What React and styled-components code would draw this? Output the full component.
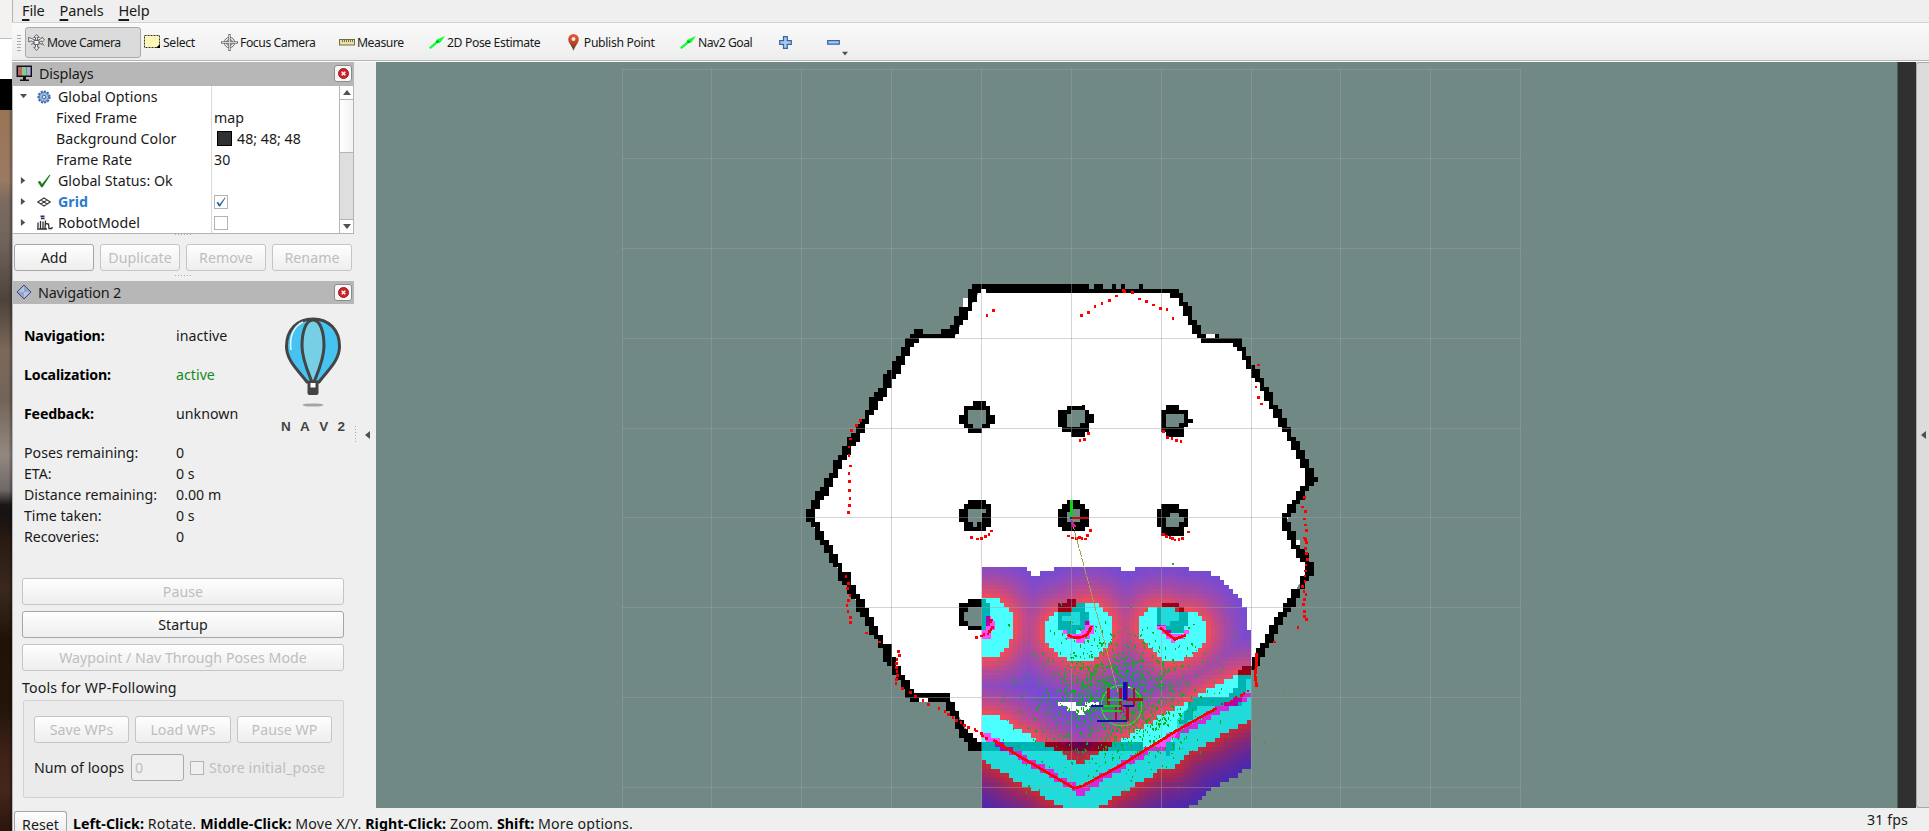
import React from "react";
import styled, { createGlobalStyle } from "styled-components";

const GlobalStyle = createGlobalStyle`
  html, body { margin: 0; padding: 0; }
  body {
    width: 1929px; height: 831px; overflow: hidden; background: #efefef; color: #1a1a1a;
    font-family: "Noto Sans", "Open Sans", sans-serif; font-size: 14.2px; letter-spacing: 0.02px;
  }
  * { box-sizing: border-box; }
  svg { display: block; flex: none; }
`;

const Screen = styled.div`display: flex; width: 1929px; height: 831px; overflow: hidden;`;
const Desktop = styled.div`
  width: 12px; flex: none;
  background:
    linear-gradient(90deg, rgba(0,0,0,0) 70%, rgba(0,0,0,.3) 100%) 0 110px no-repeat,
    linear-gradient(#f4f2f0 0 38px, #c9bdb4 38px 39px, #fff 39px 79px, #000 79px 110px,
      #987457 110px, #9b7a62 180px, #7b6b60 200px, #70645c 240px, #4e443c 300px, #5d5046 320px,
      #7b695a 350px, #736459 400px, #938880 455px, #6e6867 490px, #191615 505px, #171312 515px,
      #2a1b13 540px, #3a281e 590px, #211208 640px, #24150b 710px, #3d2117 750px, #45261c 790px, #2b150c 831px);
`;
const Window = styled.div`
  flex: 1; min-width: 0; display: flex; flex-direction: column;
  box-shadow: inset 1px 0 #b4b4b4; background: #efefef;
`;
const MenuBar = styled.div`
  height: 23px; flex: none; border-bottom: 1px solid #d2d2d2;
  display: flex; gap: 15px; padding: 0 0 0 10px; line-height: 20px;
`;
const MenuItem = styled.span`
  height: 20px; font-size: 14.5px; letter-spacing: -0.15px;
  &::first-letter { text-decoration: underline; text-decoration-thickness: 2px; text-underline-offset: 3px; }
`;
const ToolBar = styled.div`
  height: 39px; flex: none; display: flex; align-items: flex-start; padding: 4px 0 0 5px;
  background: linear-gradient(#fafafa, #ededed); border-bottom: 1px solid #fff; box-shadow: inset 0 -1px #b4b4b4;
`;
const Handle = styled.div`
  width: 4px; height: 17px; margin: 7px 4px 0 0; background: radial-gradient(circle, #aaa 0.6px, transparent 1px) 0 0 / 2px 3px;
`;
const Tool = styled.div`
  width: ${p => p.$w}px; height: 31px; flex: none; display: flex; align-items: center; gap: 2px; padding: 0 0 1px 2px;
  font-size: 12.2px; letter-spacing: ${p => p.$ls || -0.33}px; white-space: nowrap;
  border: 1px solid ${p => (p.$on ? "#a9a9a9" : "transparent")}; border-radius: 3px;
  background: ${p => (p.$on ? "#dbdbdb" : "none")};
`;
const OverflowArrow = styled(Tool)`align-items: flex-end; padding-bottom: 0;`;
const Body = styled.div`height: 746px; flex: none; display: flex;`;
const Dock = styled.div`width: 342px; display: flex; flex-direction: column;`;
const DockTitle = styled.div`
  height: ${p => p.$h}px; flex: none; display: flex; align-items: center; gap: 6px; padding: 0 2px 1px 4px;
  background: #b7b7b7; font-size: 14.4px; letter-spacing: -0.2px;
  & > span { flex: 1; }
`;
const CloseButton = styled.div`
  width: 18px; height: 17px; border: 1px solid #8c8c8c; border-radius: 3px; background: #f8f8f8;
  display: grid; place-items: center;
`;
const Tree = styled.div`
  height: 148px; flex: none; margin-left: 1px; display: flex; background: #fff; border-bottom: 1px solid #b4b4b4; border-right: 1px solid #b4b4b4;
`;
const TreeRows = styled.div`flex: 1; overflow: hidden;
  background: linear-gradient(#dadada, #dadada) 198px 0 / 1px 100% no-repeat;`;
const TreeRow = styled.div`height: 21px; display: flex; align-items: center;`;
const TreeName = styled.div`
  width: 198px; height: 21px; flex: none; display: flex; align-items: center; padding-left: ${p => (p.$child ? 43 : 7)}px;
  color: ${p => (p.$hi ? "#2a7bcc" : "#1a1a1a")}; font-weight: ${p => (p.$hi ? 700 : 400)};
`;
const Expander = styled.div`width: 17px; flex: none;`;
const IconSlot = styled.div`width: 21px; flex: none;`;
const TreeValue = styled.div`display: flex; align-items: center; gap: 5px; padding-left: 3px;`;
const Swatch = styled.i`width: 15px; height: 15px; margin-left: 3px; background: #303030; border: 1px solid #000;`;
const Check = styled.div`
  width: 14px; height: 14px; flex: none; background: ${p => (p.$off ? "#efefef" : "#fff")}; border: 1px solid #b4b4b4; display: grid; place-items: center;
`;
const Scroll = styled.div`width: 14px; flex: none; border-left: 1px solid #b4b4b4; display: flex; flex-direction: column;`;
const ScrollArrow = styled.div`height: 14px; display: grid; place-items: center; border: solid #b4b4b4; border-width: ${p => (p.$down ? "1px 0 0" : "0 0 1px")};`;
const Thumb = styled.div`height: 53px; background: linear-gradient(90deg, #fff, #f3f3f3); border-bottom: 1px solid #b4b4b4;`;
const Track = styled.div`flex: 1; background: #dedede;`;
const Grip = styled.div`
  height: ${p => p.$h}px; flex: none; display: flex; justify-content: center; align-items: ${p => p.$a || "center"};
  &::before { content: ""; width: 17px; height: 2px; background: linear-gradient(90deg, #aaa 1px, transparent 1px) 0 0 / 3px 1px repeat-x; }
`;
const ButtonRow = styled.div`display: flex; gap: 6px; padding: ${p => p.$pad || "0"};`;
const Button = styled.button`
  width: ${p => p.$w}px; height: 27px; flex: none; padding: 0 0 1px; border-radius: 3px; font: inherit; letter-spacing: 0.03px;
  border: 1px solid ${p => (p.disabled ? "#c5c5c5" : "#a6a6a6")}; background: linear-gradient(#fefefe, #eeeeee);
  color: ${p => (p.disabled ? "#bebebe" : "#1a1a1a")};
`;
const ResetButton = styled(Button)`
  height: 20px; padding: 6px 0 0; border-bottom: 0; border-radius: 3px 3px 0 0; line-height: 13px;
`;
const NavPanel = styled.div`flex: 1; display: flex; flex-direction: column; padding: 12px 10px 0 10px;`;
const Status = styled.div`display: flex; height: 262px; padding: 0 0 0 2px;`;
const StatusGrid = styled.div`
  width: 248px; flex: none; display: grid; grid-template-columns: 152px 1fr; align-content: start;
  grid-template-rows: repeat(3, 39px) 30px repeat(4, 21px); line-height: 21px;
`;
const Key = styled.span`
  align-self: ${p => (p.$b ? "center" : "end")};
  font-weight: ${p => (p.$b ? 700 : 400)}; color: ${p => (p.$b ? "#000" : "#1a1a1a")};
  letter-spacing: ${p => (p.$b ? -0.17 : -0.02)}px; white-space: nowrap;
`;
const Val = styled.span`align-self: ${p => (p.$b ? "center" : "end")}; color: ${p => p.$c || "#1a1a1a"};`;
const Logo = styled.div`
  width: 78px; flex: none; display: flex; flex-direction: column; align-items: center; color: #444; padding: 1px 0 0 4px;
  font: 700 13.5px/14px "Liberation Sans", Arial, sans-serif; letter-spacing: 0;
`;
const LogoText = styled.div`width: 64px; margin: 13px 0 0; display: flex; justify-content: space-between;`;
const Stack = styled.div`display: flex; flex-direction: column; gap: 6px;`;
const GroupLabel = styled.div`height: 29px; line-height: 33px; letter-spacing: 0.15px;`;
const Group = styled.div`
  width: 321px; height: 98px; margin-left: 1px; padding: 15px 10px; border: 1px solid #d2d2d2; border-radius: 2px; background: #ebebeb;
  display: flex; flex-direction: column; gap: 11px;
`;
const Loops = styled.div`height: 27px; display: flex; align-items: center; & > span:first-child { width: 97px; letter-spacing: 0; }`;
const NumField = styled.div`width: 53px; height: 27px; margin-right: 6px; border: 1px solid #a9a9a9; border-radius: 3px; padding: 3px 3px; line-height: 20px; color: #bebebe; background: #efefef;`;
const Dim = styled.span`color: #bebebe; margin-left: 5px; white-space: nowrap; letter-spacing: 0.14px;`;
const Splitter = styled.div`
  width: ${p => p.$w}px; flex: none; display: flex; align-items: center; justify-content: flex-end;
  gap: 8px; padding-right: ${p => p.$pr}px;
  ${p => p.$bar && "background: #dcdcdc; border: 1px solid #a9a9a9; border-right: 0; border-radius: 3px 0 0 3px;"}
`;
const Dots = styled.i`width: 1px; height: 17px; background: linear-gradient(#aaa 1px, transparent 1px) 0 0 / 1px 3px; margin-top: -2px;`;
const StatusBar = styled.div`flex: 1; display: flex; align-items: flex-start; padding: 3px 0 0 2px;`;
const Hint = styled.div`
  flex: 1; padding: 5px 0 0 6px; line-height: 15px; white-space: pre; letter-spacing: 0.16px;
  b { color: #000; letter-spacing: 0.06px; }
`;
const Fps = styled.div`width: 62px; line-height: 18px; letter-spacing: 0.1px;`;

/* ---------- icons ---------- */
const Tri = ({ d = "right", s = 8 }) => {
  const p = { right: "M1 0 6 4 1 8Z", down: "M0 1H8L4 6Z", up: "M0 6H8L4 1Z", left: "M6 0 1 4 6 8Z" }[d];
  return <svg width={s} height={s} viewBox="0 0 8 8"><path d={p} fill="#505050" /></svg>;
};
const MoveIcon = ({ focus }) => (
  <svg width="17" height="17" viewBox="0 0 17 17" fill="none" stroke="#666" strokeWidth="1">
    {focus ? (
      <>
        <circle cx="8.5" cy="8.5" r="5.2" /><circle cx="8.5" cy="8.5" r="3" />
        <path d="M8.5 0V17M0 8.5H17" stroke="#777" strokeWidth="2.4" /><path d="M8.5 1V16M1 8.5H16" stroke="#ddd" strokeWidth=".9" />
      </>
    ) : (
      <path fill="#f4f4f4" d="M8.5.5 11.3 3.5H9.5V6.5L14 4.2V3L16.5 6 14 8.3V6.8L10.6 8.8 14 10.5V9.3L16.5 11.5M8.5.5 5.7 3.5H7.5V6.5L3 4.2 .5 3.5.8 8 3 6.8 6.4 8.8 3 10.5M7.5 10V13.2H5.7L8.5 16.5 11.3 13.2H9.5V10M6 6.5H11V10.5H6Z" />
    )}
  </svg>
);
const SelectIcon = () => (
  <svg width="17" height="14" viewBox="0 0 17 14"><rect x=".5" y=".5" width="15" height="12" fill="#fdf6b5" stroke="#333" strokeDasharray="2 1" /><path d="M12 13H16V9Z" fill="#000" /></svg>
);
const MeasureIcon = () => (
  <svg width="16" height="7" viewBox="0 0 16 7"><rect x=".5" y=".5" width="15" height="5.5" fill="#e9e0a2" stroke="#6f6a4d" /><path d="M3.5 1V3M5.5 1V3M7.5 1V3M9.5 1V3M11.5 1V3M13.5 1V3" stroke="#777050" /></svg>
);
const ArrowIcon = () => (
  <svg width="16" height="13" viewBox="0 0 16 13"><path d="M0 11.5 7 5.5 7 4 16 0 11 7 9 7 1.5 13Z" fill="#0fff33" /><path d="M6.5 5.5 9 7 10 4.5Z" fill="#0a8a1c" /></svg>
);
const PinIcon = () => (
  <svg width="11" height="17" viewBox="0 0 11 17">
    <defs><linearGradient id="pin" x2="0" y2="1"><stop offset="0" stopColor="#e8593a" /><stop offset=".45" stopColor="#c04a28" /><stop offset="1" stopColor="#4d3a28" /></linearGradient></defs>
    <path d="M5.5 0A5.3 5.3 0 0 1 10.8 5.4C10.8 9 7 11.5 5.5 16.8 4 11.5.2 9 .2 5.4A5.3 5.3 0 0 1 5.5 0Z" fill="url(#pin)" /><circle cx="5.5" cy="5" r="2" fill="#fbe9e2" />
  </svg>
);
const PlusIcon = () => <svg width="13" height="13" viewBox="0 0 13 13"><path d="M4.5.7H8.3V4.7H12.3V8.3H8.3V12.3H4.5V8.3H.7V4.7H4.5Z" fill="#a9cbef" stroke="#3565a5" strokeWidth="1.2" /></svg>;
const MinusIcon = () => <svg width="13" height="13" viewBox="0 0 13 13"><path d="M.7 4.6H12.3V8.2H.7Z" fill="#a9cbef" stroke="#3565a5" strokeWidth="1.2" /></svg>;
const MonitorIcon = () => (
  <svg width="17" height="17" viewBox="0 0 17 17"><path d="M.5.5H16V12H.5Z" fill="#111" /><path d="M2 2H6V10.5H2Z" fill="#b66" /><path d="M6 2H10.5V10.5H6Z" fill="#8c8" /><path d="M10.5 2H14.6V10.5H10.5Z" fill="#aad" /><path d="M7 12H10V14.5H13V16H4V14.5H7Z" fill="#111" /></svg>
);
const DiamondIcon = () => (
  <svg width="16" height="16" viewBox="0 0 16 16"><path d="M8 1 15 8 8 15 1 8Z" fill="#93a4cb" stroke="#36487c" /><path d="M8 2 8 8 2 8ZM8 8H14L8 14Z" fill="#c5d0e8" opacity=".7" /></svg>
);
const CloseIcon = () => (
  <svg width="11" height="11" viewBox="0 0 11 11"><circle cx="5.5" cy="5.5" r="5" fill="#cf2127" stroke="#9d1b20" /><path d="M3.7 3.7 7.3 7.3M7.3 3.7 3.7 7.3" stroke="#fff" strokeWidth="1.5" /></svg>
);
const GearIcon = () => (
  <svg width="14" height="14" viewBox="0 0 14 14"><circle cx="7" cy="7" r="5.6" fill="#9dbbe2" stroke="#3a68aa" strokeWidth="2" strokeDasharray="2 1.2" /><circle cx="7" cy="7" r="4.6" fill="#9dbbe2" stroke="#5580bd" /><circle cx="7" cy="7" r="1.8" fill="#dde8f6" stroke="#3a68aa" /></svg>
);
const TickIcon = ({ c = "#1d7a24", s = 14 }) => <svg width={s} height={s} viewBox="0 0 14 14"><path d="M.8 8 3 6.8 5 10 12.5.8 13.5 1 5.6 13.2 4.2 13.2Z" fill={c} /></svg>;
const GridIcon = () => <svg width="14" height="10" viewBox="0 0 14 10"><path d="M.8 5 7 1 13.2 5 7 9ZM3.9 3 10.1 7M10.1 3 3.9 7" fill="none" stroke="#3c3c3c" strokeWidth="1.1" /></svg>;
const RobotIcon = () => (
  <svg width="16" height="15" viewBox="0 0 16 15">
    <path d="M3.500 1.400H7.500" stroke="#1f2d8a" strokeWidth="1.800" />
    <path d="M4 3.500H7.500M1 13V7.500M3.500 6V14M6 6.500V14M8.500 5.500 8 13.500M8.500 8.500 11.500 9 12 13.500H14.500L15.500 12M0 14H10" fill="none" stroke="#2e2e2e" strokeWidth="1.300" />
  </svg>
);
const Balloon = () => (
  <svg width="56" height="90" viewBox="0 0 56 90">
    <path d="M28 2C44 2 54.500 13 54.500 29.500 54.500 44 42 54 34 65H22C14 54 1.500 44 1.500 29.500 1.500 13 12 2 28 2Z" fill="#47c3f1" stroke="#444" strokeWidth="3" />
    <path d="M6 33C4 19 9 9 18 5" fill="none" stroke="#e7f6fd" strokeWidth="1.5" />
    <path d="M28 3C20 3 17 17 17 29 17 42 23 55 27 65H29C33 55 39 42 39 29 39 17 36 3 28 3Z" fill="#76cfe5" stroke="#444" strokeWidth="3" />
    <path d="M22.500 64H33.500V76Q33.500 78 31.500 78H24.500Q22.500 78 22.500 76Z" fill="#444" /><rect x="25.500" y="66" width="5" height="4.500" fill="#fff" />
    <ellipse cx="28" cy="88" rx="10.500" ry="1.600" fill="#a3a5ab" />
  </svg>
);

/* ---------- map data: one unit is a third of a screen pixel ---------- */
const CELL = 13.47;
const NW = [0, 0], NE = [780, 0], SW = [0, 780], SE = [780, 780];
const boxes = ([ox, oy], list) => list.map(([a, b, c, d]) => `M${a + ox} ${b + oy}H${c + ox}V${d + oy}H${a + ox}Z`).join("");
const poly = ([ox, oy], s) => s.split(" ").map(q => { const [x, y] = q.split(",").map(Number); return `${x + ox},${y + oy}`; }).join(" ");

const FREE = [
  poly(NW, "603,87 900,87"), poly(NE, "410,93 430,130 490,240 590,245 815,650 735,790"),
  poly(SE, "735,0 805,145 640,430 634,450 600,500 595,540 455,550 410,600 410,640 390,680 310,680 310,667 0,667"),
  poly(SW, "606,667 580,667 510,540 390,525 90,0"), poly(NW, "90,760 280,430 345,320 395,228 525,228 570,140"),
].join(" ");

const WALLS =
  boxes(NW, [[576,72,603,99],[603,72,618,87],[618,72,900,99],[564,87,591,126],[564,126,576,153],[537,141,564,180],[522,168,549,195],[510,195,537,222],[483,207,525,234],[402,207,429,234],[390,222,525,234],[375,234,417,249],[375,234,402,261],[363,261,390,288],[348,288,375,315],[336,303,363,342],[336,342,348,357],[321,330,336,384],[309,342,336,384],[294,384,321,411],[282,396,309,423],[267,411,294,450],[255,450,282,465],[255,450,267,492],[240,477,267,492],[228,492,255,519],[213,519,240,546],[201,531,228,558],[186,558,213,585],[174,585,201,600],[159,600,186,627],[159,627,174,654],[147,639,174,654],[132,654,159,681],[120,681,147,708],[105,693,132,720],[93,720,120,747],[78,747,105,786],[93,786,120,801],[105,801,120,813],[105,813,132,840]]) +
  boxes(NE, [[0,72,147,99],[147,87,417,99],[162,72,189,87],[216,72,228,87],[243,72,255,87],[297,72,309,87],[390,87,417,114],[417,99,429,139],[429,126,444,139],[429,139,456,168],[444,168,456,195],[456,180,471,222],[471,195,483,222],[471,222,498,234],[483,234,606,249],[525,222,537,234],[579,249,606,261],[591,261,618,273],[606,273,618,300],[618,288,633,327],[633,315,645,354],[645,327,660,367],[660,354,672,394],[672,381,687,423],[687,396,699,448],[699,435,714,475],[714,448,726,502],[726,475,741,515],[741,502,753,542],[753,530,768,569],[768,542,780,596],[780,569,795,623],[795,596,807,677],[807,623,822,677],[822,651,834,665],[780,677,807,692],[780,692,795,705],[768,692,795,719],[756,719,780,732],[741,732,768,758],[726,758,753,772],[726,772,741,812],[741,812,768,840]]) +
  boxes(SW, [[78,0,105,6],[93,6,120,20],[105,20,120,47],[105,33,132,47],[120,47,132,74],[132,60,147,100],[147,74,159,128],[159,101,174,141],[174,128,186,182],[186,155,201,195],[201,155,213,222],[213,195,228,236],[228,222,240,276],[240,236,255,290],[255,263,267,317],[267,290,282,344],[282,317,294,357],[294,344,309,384],[309,371,321,425],[321,371,336,438],[336,411,348,465],[348,438,363,479],[363,465,375,506],[375,479,390,533],[390,506,402,546],[402,519,510,533],[402,533,417,546],[444,533,510,546],[498,546,525,573],[510,573,537,587],[525,573,537,627],[537,600,552,654],[552,627,564,667],[564,640,579,693],[579,654,591,693],[591,667,780,693]]) +
  boxes(SE, [[726,0,741,33],[741,6,753,60],[753,33,768,87],[768,74,780,114],[780,87,795,127],[795,100,807,167],[807,127,822,167],[780,167,807,182],[780,182,795,208],[753,208,780,235],[741,235,768,262],[729,248,753,275],[714,275,741,290],[702,290,729,316],[687,316,714,343],[675,343,702,370],[660,370,687,384],[648,384,675,411],[636,411,660,438],[606,438,648,450],[595,450,634,478],[595,478,618,505],[580,505,618,520],[566,520,606,558],[460,532,566,558],[445,545,472,572],[432,572,460,600],[418,600,445,612],[378,667,404,693],[378,693,391,708],[0,667,310,693]]) +
  boxes(NW, [[579,423,618,438],[552,438,630,504],[537,465,552,492],[630,465,645,492],[564,504,606,519],[564,720,618,732],[552,732,633,800],[537,747,633,786],[552,786,618,812]]) +
  boxes(NE, [[81,438,135,450],[126,435,135,450],[54,450,148,502],[148,461,162,489],[66,502,148,515],[94,502,135,530],[378,435,417,450],[364,450,444,502],[444,477,459,489],[364,502,432,515],[378,502,432,530],[81,720,121,732],[66,732,135,747],[54,747,148,800],[66,800,135,812],[364,732,418,747],[352,747,444,800],[364,800,432,827],[432,747,432,760]]) +
  boxes(SW, [[564,237,618,250],[537,250,631,317],[564,317,618,330]]) +
  boxes(SE, [[81,237,108,250],[55,250,135,330],[135,275,148,316],[81,316,108,343],[366,250,418,262],[352,262,432,303],[352,275,444,317],[378,317,432,338]]);
const UNKNOWN_SPOTS =
  boxes(NW, [[564,450,618,492],[579,492,606,504],[564,747,618,760],[564,747,606,786],[579,786,591,800]]) +
  boxes(NE, [[81,461,121,502],[94,450,135,475],[94,475,135,489],[94,747,121,786],[81,755,121,786],[378,461,432,489],[378,475,418,502],[378,772,418,800],[391,758,418,800],[418,772,432,786]]) +
  boxes(SW, [[564,262,606,317],[552,276,564,303]]) +
  boxes(SE, [[67,289,121,303],[94,275,121,316],[364,262,418,303],[364,289,391,317]]);
const FREE_SPOTS = boxes(NW, [[549,114,564,141],[603,87,618,99]]) + boxes(NE, [[498,222,525,234]]) + boxes(SW, [[417,533,444,546]]) + boxes(SE, [[768,60,780,74]]);

/* ---------- local costmap: 60 x 60 cells ---------- */
const lethal = new Set(["1,2","1,3","2,3","1,4","2,4","0,5","1,5","0,6","1,6","23,3","23,4","24,4","18,5","22,5","23,5","24,5","19,6","20,6","21,6","22,6","23,6","21,7","22,7","39,4","40,4","40,5","41,5","45,5","41,6","42,6","43,6","44,6","42,7"]);
const MIN_ROW = -9, MAX_ROW = 45;
for (let c = 0; c <= 21; c += 1) { const r = Math.round(28.2 + c * 0.59); lethal.add(`${c},${r}`); lethal.add(`${c + 1},${r}`); }
for (let c = 21; c <= 59; c += 1) {
  const t = c - 21, r = Math.round(40.4 - t * 0.572 - Math.sin((t / 38) * Math.PI) * 0.5);
  lethal.add(`${c},${r}`); if (c < 59) lethal.add(`${c + 1},${r}`);
}
lethal.add("39,31"); lethal.add("40,31"); lethal.add("38,31");
const hits = [...lethal].map(k => k.split(",").map(Number));
const costCells = [];
for (let r = MIN_ROW; r <= MAX_ROW; r += 1) {
  for (let c = 0; c < 60; c += 1) {
    let best = 1e9;
    for (const [hc, hr] of hits) best = Math.min(best, (hc - c) ** 2 + (hr - r) ** 2);
    const d = Math.sqrt(best);
    let fill = null;
    if (d === 0) fill = "rgb(255,0,255)";
    else if (d <= 4.5) fill = "rgb(0,255,255)";
    else if (d <= 14) {
      const v = Math.min(255, Math.round(255 * Math.exp(-3 * (d * 0.05 - 0.22))));
      fill = `rgb(${v},0,${255 - v})`;
    }
    if (fill) costCells.push({ c, r, fill });
  }
}

let seed = 7;
const rnd = () => { seed = (seed * 16807) % 2147483647; return seed / 2147483647; };
const gauss = () => Math.sqrt(-2 * Math.log(rnd() + 1e-9)) * Math.cos(2 * Math.PI * rnd());
const particles = Array.from({ length: 1350 }, (_, i) => {
  const wide = i % 3 === 0;
  const x = 1015 + gauss() * (wide ? 150 : 105), y = 1310 + gauss() * (wide ? 125 : 85);
  if (x < 620 || x > 1408 || y < 980 || y > 1636) return "";
  return `M${x.toFixed(0)} ${y.toFixed(0)}h${rnd() > 0.6 ? 5 : 3}v${rnd() > 0.5 ? 8 : 4}h-3z`;
}).join("");

const scan = ([ox, oy], s) => s.split(" ").map(q => { const [x, y] = q.split(",").map(Number); return `M${x + ox - 4} ${y + oy - 4}h8v8h-8z`; }).join("");
const LASER =
  scan(NW, "621,166 640,151 242,481 229,497 215,511 212,537 207,561 207,587 212,618 207,640 208,665 209,691 210,715 208,736 206,757 574,833 592,837 604,835 617,830 627,824 634,813") +
  scan(NE, "125,166 145,158 165,140 186,130 208,121 229,108 250,91 254,94 277,97 298,117 319,124 340,135 361,146 381,148 399,176 656,315 648,381 655,412 665,432 794,713 787,741 796,754 794,777 796,795 799,811 794,834 120,541 133,538 145,521 370,514 382,532 396,536 410,541 423,545 445,816 85,828 97,834 109,836 118,832 126,836 136,837 143,826 151,812 371,824 380,829 390,832 398,836 405,840 417,838 428,835") +
  scan(SW, "198,169 206,190 202,206 210,226 206,241 201,256 204,274 211,293 212,308 259,339 299,366 355,394 358,407 351,418 350,430 350,442 351,455 353,467 349,479 348,491 368,505 391,518 406,530 429,541 445,553 477,565 495,574 505,583 519,592 530,601 543,608 554,616 565,622 585,629 590,633 604,640 607,648 620,656 590,352 604,348 612,343 624,342 629,334 633,328 638,322 632,306 634,300") +
  scan(SE, "798,31 800,67 796,58 796,86 799,101 802,118 798,135 796,153 795,168 795,184 788,199 792,214 798,223 794,239 790,254 794,274 794,290 799,299 774,323 703,366 624,513 612,520 604,526 588,532 574,543 562,549 546,552");
const LASER_LINES = [
  poly(SW, "640,660 680,685 720,710 760,733 800,757 835,777 884,806"),
  poly(SE, "104,805 130,797 170,775 240,738 300,700 370,657 410,632 460,604 500,581 530,565"),
  poly(SE, "650,398 650,430 645,465 650,500"),
  poly(SE, "82,345 100,352 122,352 140,345 150,330 154,318"),
  poly(SE, "360,322 380,340 405,358 420,352 438,345"),
];
const GRID_X = Array.from({ length: 11 }, (_, i) => -474 + i * 269.6);
const GRID_Y = Array.from({ length: 9 }, (_, i) => -573 + i * 269.3);

const MapView = () => (
  <svg width="1540" height="746" viewBox="376 62 1540 746" shapeRendering="crispEdges">
    <rect x="376" y="62" width="1521" height="746" fill="#708985" />
    <rect x="1897" y="62" width="1" height="746" fill="#4f5e5b" />
    <rect x="1898" y="62" width="18" height="746" fill="#303030" />
    <g transform="translate(780 260) scale(.33333)">
      <polygon points={FREE} fill="#fff" />
      <path d={WALLS} fill="#000" />
      <path d={UNKNOWN_SPOTS} fill="#708985" />
      <path d={FREE_SPOTS} fill="#fff" />
      <g opacity=".7">
        {costCells.map(({ c, r, fill }) => (
          <rect key={`${c},${r}`} x={606 + c * CELL} y={1042 + r * CELL} width={CELL} height={CELL} fill={fill} />
        ))}
      </g>
      <path d={GRID_X.map(x => `M${x} -573V1700`).join("") + GRID_Y.map(y => `M-474 ${y}H2222`).join("")} stroke="#a0a0a4" strokeOpacity=".45" strokeWidth="3" />
      <path d={particles} fill="#00b414" />
      <path d="M1511 1298h5v6h-5zM1422 1428h4v5h-4zM1452 1447h4v4h-4zM1177 910h6v4h-6z" fill="#17b52a" />
      <path d={LASER} fill="#f00" />
      {LASER_LINES.map(l => <polyline key={l} points={l} fill="none" stroke="#f00" strokeWidth="8" />)}
      <path d="M876 785 1015 1300" stroke="#a8a24a" strokeWidth="3" strokeDasharray="12 2" />
      <path d="M874 780 886 798 878 800Z" fill="#d81b8c" stroke="#d81b8c" strokeWidth="4" />
      <path d="M874 720V773" stroke="#12d412" strokeWidth="8" /><path d="M874 773H927" stroke="#c40c0c" strokeWidth="6" /><path d="M870 773H877" stroke="#1515d0" strokeWidth="6" />
      <circle cx="1025" cy="1337" r="61" fill="none" stroke="#3ccf3c" strokeWidth="3.500" />
      <path d="M985 1284V1337M1022 1284V1350M1062 1284V1337M1037 1319H1090M1008 1338V1382M1042 1338V1382" stroke="#b10d26" strokeWidth="8" fill="none" />
      <path d="M985 1319H1025M972 1338H1022M970 1354H1022" stroke="#12c92c" strokeWidth="6" />
      <path d="M932 1338H970M1025 1338H1062M952 1384H1042" stroke="#1010a8" strokeWidth="6" />
      <path d="M1036 1266V1320" stroke="#1010c8" strokeWidth="11" /><path d="M1043 1266V1320" stroke="#a81030" strokeWidth="4" />
      <path d="M1024 1325 1038 1375M1020 1360 1040 1340" stroke="#c01a78" strokeWidth="5" strokeDasharray="6 4" />
    </g>
  </svg>
);

const rows = [
  { name: "Global Options", icon: <GearIcon />, open: true },
  { name: "Fixed Frame", child: true, value: "map" },
  { name: "Background Color", child: true, value: <><Swatch />48; 48; 48</> },
  { name: "Frame Rate", child: true, value: "30" },
  { name: "Global Status: Ok", icon: <TickIcon /> },
  { name: "Grid", icon: <GridIcon />, hi: true, value: <Check><TickIcon c="#225f9f" s={10} /></Check> },
  { name: "RobotModel", icon: <RobotIcon />, value: <Check /> },
];
const facts = [
  ["Navigation:", "inactive", true], ["Localization:", "active", true, "#148a1c"], ["Feedback:", "unknown", true],
  ["Poses remaining:", "0"], ["ETA:", "0 s"], ["Distance remaining:", "0.00 m"], ["Time taken:", "0 s"], ["Recoveries:", "0"],
];

const Title = ({ icon, h, children }) => (
  <DockTitle $h={h}>{icon}<span>{children}</span><CloseButton><CloseIcon /></CloseButton></DockTitle>
);

export default function App() {
  return (
    <Screen>
      <GlobalStyle />
      <Desktop />
      <Window>
        <MenuBar><MenuItem>File</MenuItem><MenuItem>Panels</MenuItem><MenuItem>Help</MenuItem></MenuBar>
        <ToolBar>
          <Handle />
          <Tool $w={116} $ls={-0.48} $on><MoveIcon />Move Camera</Tool>
          <Tool $w={77}><SelectIcon />Select</Tool>
          <Tool $w={118} $ls={-0.42}><MoveIcon focus />Focus Camera</Tool>
          <Tool $w={90} $ls={-0.45}><MeasureIcon />Measure</Tool>
          <Tool $w={139} $ls={-0.38}><ArrowIcon />2D Pose Estimate</Tool>
          <Tool $w={112}><PinIcon /><span>&nbsp;Publish Point</span></Tool>
          <Tool $w={99} $ls={-0.5}><ArrowIcon />Nav2 Goal</Tool>
          <Tool $w={48}><PlusIcon /></Tool>
          <Tool $w={15}><MinusIcon /></Tool>
          <OverflowArrow $w={12}><Tri d="down" s={6} /></OverflowArrow>
        </ToolBar>
        <Body>
          <Dock>
            <Title h={24} icon={<MonitorIcon />}>Displays</Title>
            <Tree>
              <TreeRows>
                {rows.map(r => (
                  <TreeRow key={r.name}>
                    <TreeName $child={r.child} $hi={r.hi}>
                      {!r.child && <><Expander><Tri d={r.open ? "down" : "right"} s={7} /></Expander><IconSlot>{r.icon}</IconSlot></>}
                      {r.name}
                    </TreeName>
                    <TreeValue>{r.value}</TreeValue>
                  </TreeRow>
                ))}
              </TreeRows>
              <Scroll><ScrollArrow><Tri d="up" /></ScrollArrow><Thumb /><Track /><ScrollArrow $down><Tri d="down" /></ScrollArrow></Scroll>
            </Tree>
            <Grip $h={10} $a="flex-start" />
            <ButtonRow $pad="0 0 0 2px">
              <Button $w={80}>Add</Button><Button $w={80} disabled>Duplicate</Button>
              <Button $w={80} disabled>Remove</Button><Button $w={80} disabled>Rename</Button>
            </ButtonRow>
            <Grip $h={10} />
            <Title h={23} icon={<DiamondIcon />}>Navigation 2</Title>
            <NavPanel>
              <Status>
                <StatusGrid>
                  {facts.map(([k, v, b, c]) => <React.Fragment key={k}><Key $b={b}>{k}</Key><Val $b={b} $c={c}>{v}</Val></React.Fragment>)}
                </StatusGrid>
                <Logo><Balloon /><LogoText><span>N</span><span>A</span><span>V</span><span>2</span></LogoText></Logo>
              </Status>
              <Stack>
                <Button $w={322} disabled>Pause</Button>
                <Button $w={322}>Startup</Button>
                <Button $w={322} disabled>Waypoint / Nav Through Poses Mode</Button>
              </Stack>
              <GroupLabel>Tools for WP-Following</GroupLabel>
              <Group>
                <ButtonRow>
                  <Button $w={95} disabled>Save WPs</Button><Button $w={96} disabled>Load WPs</Button><Button $w={95} disabled>Pause WP</Button>
                </ButtonRow>
                <Loops><span>Num of loops</span><NumField>0</NumField><Check $off /><Dim>Store initial_pose</Dim></Loops>
              </Group>
            </NavPanel>
          </Dock>
          <Splitter $w={22} $pr={4}><Dots /><Tri d="left" /></Splitter>
          <MapView />
          <Splitter $w={13} $pr={1} $bar><Tri d="left" /></Splitter>
        </Body>
        <StatusBar>
          <ResetButton $w={53}>Reset</ResetButton>
          <Hint><b>Left-Click:</b> Rotate. <b>Middle-Click:</b> Move X/Y. <b>Right-Click:</b> Zoom. <b>Shift:</b> More options.</Hint>
          <Fps>31 fps</Fps>
        </StatusBar>
      </Window>
    </Screen>
  );
}
